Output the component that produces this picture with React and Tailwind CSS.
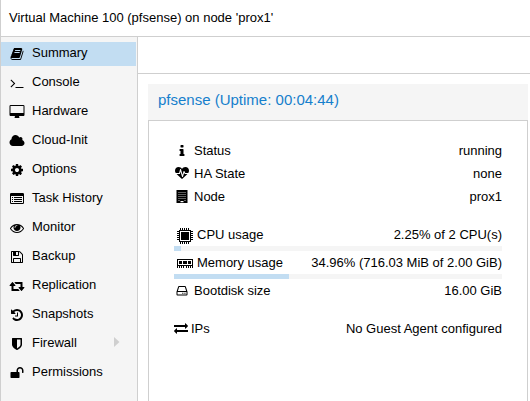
const paths = {
  book: 'M1703 478q40 57 18 129l-275 906q-19 64-76.5 107.5t-122.5 43.5h-923q-77 0-148.5-53.5t-99.5-131.5q-24-67-2-127 0-4 3-27t4-37q1-8-3-21.5t-3-19.5q2-11 8-21t16.5-23.5 16.5-23.5q23-38 45-91.5t30-91.5q3-10 .5-30t-.5-28q3-11 17-28t17-23q21-36 42-92t25-90q1-9-2.5-32t.5-28q4-13 22-30.5t22-22.5q19-26 42.5-84.5t27.5-96.5q1-8-3-25.5t-2-26.5q2-8 9-18t18-23 17-21q8-12 16.5-30.5t15-35 16-36 19.5-32 26.5-23.5 36-11.5 47.5 5.5l-1 3q38-9 51-9h761q74 0 114 56t18 130l-274 906q-36 119-71.5 153.5t-128.5 34.5h-869q-27 0-38 15-11 16-1 43 24 70 144 70h923q29 0 56-15.5t35-41.5l300-987q7-22 5-57 38 15 59 43zm-1064 2q-4 13 2 22.5t20 9.5h608q13 0 25.5-9.5t16.5-22.5l21-64q4-13-2-22.5t-20-9.5h-608q-13 0-25.5 9.5t-16.5 22.5zm-83 256q-4 13 2 22.5t20 9.5h608q13 0 25.5-9.5t16.5-22.5l21-64q4-13-2-22.5t-20-9.5h-608q-13 0-25.5 9.5t-16.5 22.5z',
  terminal: 'M649 983l-466 466q-10 10-23 10t-23-10l-50-50q-10-10-10-23t10-23l393-393-393-393q-10-10-10-23t10-23l50-50q10-10 23-10t23 10l466 466q10 10 10 23t-10 23zm1079 457v64q0 14-9 23t-23 9h-960q-14 0-23-9t-9-23v-64q0-14 9-23t23-9h960q14 0 23 9t9 23z',
  desktop: 'M1728 992v-832q0-13-9.5-22.5t-22.5-9.5h-1600q-13 0-22.5 9.5t-9.5 22.5v832q0 13 9.5 22.5t22.5 9.5h1600q13 0 22.5-9.5t9.5-22.5zm128-832v1088q0 66-47 113t-113 47h-544q0 37 16 77.5t32 71 16 43.5q0 26-19 45t-45 19h-512q-26 0-45-19t-19-45q0-14 16-44t32-70 16-78h-544q-66 0-113-47t-47-113v-1088q0-66 47-113t113-47h1600q66 0 113 47t47 113z',
  cloud: 'M1856 1152q0 159-112.5 271.5t-271.5 112.5h-1088q-185 0-316.5-131.5t-131.5-316.5q0-132 71-241.5t187-163.5q-2-28-2-43 0-212 150-362t362-150q158 0 286.5 88t187.5 230q70-62 166-62 106 0 181 75t75 181q0 75-41 138 129 30 213 134.5t84 239.5z',
  cog: 'M1152 896q0-106-75-181t-181-75-181 75-75 181 75 181 181 75 181-75 75-181zm512-109v222q0 12-8 23t-20 13l-185 28q-19 54-39 91 35 50 107 138 10 12 10 25t-9 23q-27 37-99 108t-94 71q-12 0-26-9l-138-108q-44 23-91 38-16 136-29 186-7 28-36 28h-222q-14 0-24.5-8.5t-11.5-21.5l-28-184q-49-16-90-37l-141 107q-10 9-25 9-14 0-25-11-126-114-165-168-7-10-7-23 0-12 8-23 15-21 51-66.5t54-70.5q-27-50-41-99l-183-27q-13-2-21-12.5t-8-23.5v-222q0-12 8-23t19-13l186-28q14-46 39-92-40-57-107-138-10-12-10-24 0-10 9-23 26-36 98.5-107.5t94.5-71.5q13 0 26 10l138 107q44-23 91-38 16-136 29-186 7-28 36-28h222q14 0 24.5 8.5t11.5 21.5l28 184q49 16 90 37l142-107q9-9 24-9 13 0 25 10 129 119 165 170 7 8 7 22 0 12-8 23-15 21-51 66.5t-54 70.5q26 50 41 98l183 28q13 2 21 12.5t8 23.5z',
  list: 'M160 128h1472q160 0 160 160v1088q0 160-160 160H160q-160 0-160-160V288q0-160 160-160zM128 512v864q0 32 32 32h1472q32 0 32-32V512zM256 640h128v128H256zM512 640h1024v128H512zM256 896h128v128H256zM512 896h1024v128H512zM256 1152h128v128H256zM512 1152h1024v128H512z',
  eye: 'M1664 960q-152-236-381-353 61 104 61 225 0 185-131.5 316.5t-316.5 131.5-316.5-131.5-131.5-316.5q0-121 61-225-229 117-381 353 133 205 333.5 326.5t434.5 121.5 434.5-121.5 333.5-326.5zm-720-384q0-20-14-34t-34-14q-125 0-214.5 89.5t-89.5 214.5q0 20 14 34t34 14 34-14 14-34q0-86 61-147t147-61q20 0 34-14t14-34zm848 384q0 34-20 69-140 230-376.5 368.5t-499.5 138.5-499.5-139-376.5-368q-20-35-20-69t20-69q140-229 376.5-368t499.5-139 499.5 139 376.5 368q20 35 20 69z',
  floppy: 'M512 1536h768v-384h-768v384zm896 0h128v-896q0-14-10-38.5t-20-34.5l-281-281q-10-10-34-20t-39-10v416q0 40-28 68t-68 28h-576q-40 0-68-28t-28-68v-416h-128v1280h128v-416q0-40 28-68t68-28h832q40 0 68 28t28 68v416zm-384-928v-320q0-13-9.5-22.5t-22.5-9.5h-192q-13 0-22.5 9.5t-9.5 22.5v320q0 13 9.5 22.5t22.5 9.5h192q13 0 22.5-9.5t9.5-22.5zm640 32v928q0 40-28 68t-68 28h-1344q-40 0-68-28t-28-68v-1344q0-40 28-68t68-28h928q40 0 88 20t76 48l280 280q28 28 48 76t20 88z',
  retweet: 'M1216 1504q0 13-9.5 22.5t-22.5 9.5h-960q-8 0-13.5-2t-9-7-5.5-8-3-11.5-1-11.5v-600h-192q-26 0-45-19t-19-45q0-24 15-41l320-384q19-22 49-22t49 22l320 384q15 17 15 41 0 26-19 45t-45 19h-192v384h576q16 0 25 11l160 192q7 10 7 21zm640-416q0 24-15 41l-320 384q-20 23-49 23t-49-23l-320-384q-15-17-15-41 0-26 19-45t45-19h192v-384h-576q-16 0-25-12l-160-192q-7-9-7-20 0-13 9.5-22.5t22.5-9.5h960q8 0 13.5 2t9 7 5.5 8 3 11.5 1 11.5v600h192q26 0 45 19t19 45z',
  history: 'M1664 896q0 156-61 298t-164 245-245 164-298 61q-172 0-327-72.5t-264-204.5q-7-10-6.5-22.5t8.5-20.5l137-138q10-9 25-9 16 2 23 12 73 95 179 147t225 52q104 0 198.5-40.5t163.5-109.5 109.5-163.5 40.5-198.5-40.5-198.5-109.5-163.5-163.5-109.5-198.5-40.5q-98 0-188 35.5t-160 101.5l137 138q31 30 14 69-17 40-59 40h-448q-26 0-45-19t-19-45v-448q0-42 40-59 39-17 69 14l130 129q107-101 244.5-156.5t284.5-55.5q156 0 298 61t245 164 164 245 61 298zm-640-288v448q0 14-9 23t-23 9h-320q-14 0-23-9t-9-23v-64q0-14 9-23t23-9h224v-352q0-14 9-23t23-9h64q14 0 23 9t9 23z',
  shield: 'M1344 960v-640h-448v1137q119-63 213-137 235-184 235-360zm192-768v768q0 86-33.5 170.5t-83 150-118 127.5-126.5 103-121 77.5-89.5 49.5-42.5 20q-12 6-26 6t-26-6q-16-7-42.5-20t-89.5-49.5-121-77.5-126.5-103-118-127.5-83-150-33.5-170.5v-768q0-26 19-45t45-19h1152q26 0 45 19t19 45z',
  unlock: 'M1728 576v256q0 26-19 45t-45 19h-64q-26 0-45-19t-19-45v-256q0-106-75-181t-181-75-181 75-75 181v192h96q40 0 68 28t28 68v576q0 40-28 68t-68 28h-960q-40 0-68-28t-28-68v-576q0-40 28-68t68-28h672v-192q0-185 131.5-316.5t316.5-131.5 316.5 131.5 131.5 316.5z',
  info: 'M1216 1344v128q0 26-19 45t-45 19h-512q-26 0-45-19t-19-45v-128q0-26 19-45t45-19h64v-384h-64q-26 0-45-19t-19-45v-128q0-26 19-45t45-19h384q26 0 45 19t19 45v576h64q26 0 45 19t19 45zm-128-1152v192q0 26-19 45t-45 19h-256q-26 0-45-19t-19-45v-192q0-26 19-45t45-19h256q26 0 45 19t19 45z',
  heartbeat: 'M1280 896h305q-5 6-10 10.5t-9 7.5l-3 4-623 600q-18 18-44 18t-44-18l-624-602q-5-2-21-20h369q22 0 39.5-13.5t22.5-34.5l70-281 190 667q6 20 23 33t39 13q21 0 38-13t23-33l146-485 56 112q18 35 57 35zm512-428q0 145-103 300h-369l-111-221q-8-17-25.5-27t-36.5-8q-45 5-56 46l-129 430-196-686q-6-20-23.5-33t-39.5-13-39 13.5-22 34.5l-116 464h-423q-103-155-103-300 0-220 127-344t351-124q62 0 126.5 21.5t120 58 95.5 68.5 76 68q36-36 76-68t95.5-68.5 120-58 126.5-21.5q224 0 351 124t127 344z',
  building: 'M192 0h1408v1664H192zM448 256v96h128V256zM704 256v96h128V256zM960 256v96h128V256zM1216 256v96h128V256zM448 512v96h128V512zM704 512v96h128V512zM960 512v96h128V512zM1216 512v96h128V512zM448 768v96h128V768zM704 768v96h128V768zM960 768v96h128V768zM1216 768v96h128V768zM448 1024v96h128v-96zM704 1024v96h128v-96zM960 1024v96h128v-96zM1216 1024v96h128v-96zM448 1280v96h128v-96zM1216 1280v96h128v-96zM704 1408v160h384v-160z',
  hdd: 'M512 256h768q80 0 104 72l188 568q28 64 28 128v320q0 128-128 128H320q-128 0-128-128v-320q0-64 28-128l188-568q24-72 104-72zM528 384L368 880h1056L1264 384zM320 1008v320h1152v-320zM928 1104h144v128H928zM1200 1104h144v128h-144z',
  exchange: 'M1792 1184v192q0 13-9.5 22.5t-22.5 9.5h-1376v192q0 13-9.5 22.5t-22.5 9.5q-12 0-24-10l-319-320q-9-9-9-22 0-14 9-23l320-320q9-9 23-9 13 0 22.5 9.5t9.5 22.5v192h1376q13 0 22.5 9.5t9.5 22.5zm0-544q0 14-9 23l-320 320q-9 9-23 9-13 0-22.5-9.5t-9.5-22.5v-192h-1376q-13 0-22.5-9.5t-9.5-22.5v-192q0-13 9.5-22.5t22.5-9.5h1376v-192q0-14 9-23t23-9q12 0 24 10l319 319q9 9 9 23z',
};

function Icon({ name, className = 'size-3.5' }) {
  return (
    <svg viewBox="0 0 1792 1792" fill="currentColor" fillRule="evenodd" className={`shrink-0 overflow-visible ${className}`}>
      <path d={paths[name]} />
    </svg>
  );
}

function CpuIcon() {
  return (
    <svg viewBox="0 0 16 16" shapeRendering="crispEdges" className="mt-[5px] ml-[3px] size-4 shrink-0">
      <path fillRule="evenodd" d="M2 2h12v12H2zM3 3v10h10V3zM4 4h8v8H4zM3 0h1v2H3zM5 0h1v2H5zM7 0h1v2H7zM9 0h1v2H9zM11 0h1v2h-1zM3 14h1v2H3zM5 14h1v2H5zM7 14h1v2H7zM9 14h1v2H9zM11 14h1v2h-1zM0 3h2v1H0zM0 5h2v1H0zM0 7h2v1H0zM0 9h2v1H0zM0 11h2v1H0zM14 3h2v1h-2zM14 5h2v1h-2zM14 7h2v1h-2zM14 9h2v1h-2zM14 11h2v1h-2z" />
    </svg>
  );
}

function MemoryIcon() {
  return (
    <svg viewBox="0 0 16 16" shapeRendering="crispEdges" className="mt-[5px] ml-[3px] size-4 shrink-0">
      <path fillRule="evenodd" d="M0 3h16v7H0zM1 4v5h14V4zM2 5h3v3H2zM6 5h4v3H6zM11 5h3v3h-3zM0 10h1v2H0zM2 10h1v2H2zM4 10h1v2H4zM6 10h1v2H6zM9 10h1v2H9zM11 10h1v2h-1zM13 10h1v2h-1zM15 10h1v2h-1z" />
    </svg>
  );
}

const menu = [
  ['book', 'Summary'],
  ['terminal', 'Console'],
  ['desktop', 'Hardware'],
  ['cloud', 'Cloud-Init'],
  ['cog', 'Options'],
  ['list', 'Task History'],
  ['eye', 'Monitor'],
  ['floppy', 'Backup'],
  ['retweet', 'Replication'],
  ['history', 'Snapshots'],
  ['shield', 'Firewall'],
  ['unlock', 'Permissions'],
];

function Row({ icon, label, value, className = 'h-[23px] leading-[22px]', gap = 'ml-[5px]' }) {
  return (
    <div className={`flex items-start ${className}`}>
      {icon}
      <span className={gap}>{label}</span>
      <span className="ml-auto">{value}</span>
    </div>
  );
}

function Bar({ percent }) {
  return (
    <div className="h-[5px] bg-[#f5f5f5]">
      <div className="h-full bg-[#c2ddf2]" style={{ width: `${percent}%` }} />
    </div>
  );
}

export default function App() {
  return (
    <div className="flex h-[401px] w-[530px] flex-col overflow-hidden border-l border-[#cfcfcf] bg-white font-['Liberation_Sans',Arial,sans-serif] text-[13px] text-black">
      <header className="h-[37px] shrink-0 border-b border-[#cfcfcf] pl-2 leading-[35px]">
        Virtual Machine 100 (pfsense) on node 'prox1'
      </header>
      <div className="flex min-h-0 flex-1">
        <nav className="flex w-[137px] shrink-0 flex-col gap-[5px] border-r border-[#cfcfcf] bg-[#f5f5f5] pt-[5px]">
          {menu.map(([icon, label], i) => (
            <div key={label} className={`mr-px flex h-6 items-start pl-[9px] ${i === 0 ? 'bg-[#c2ddf2]' : ''}`}>
              <Icon name={icon} className="mt-[5px] size-3.5" />
              <span className="ml-2 leading-[22px]">{label}</span>
              {label === 'Firewall' && (
                <svg viewBox="0 0 6 10" className="mt-[5px] mr-4 ml-auto h-2.5 w-1.5 fill-[#cfcfcf]">
                  <path d="M0 0l5.5 5L0 10z" />
                </svg>
              )}
            </div>
          ))}
        </nav>
        <main className="flex min-w-0 flex-1 flex-col">
          <div className="h-[37px] shrink-0 border-b border-[#cfcfcf]" />
          <section className="mt-2.5 mr-0.5 ml-2.5 flex flex-1 flex-col">
            <h2 className="h-9 shrink-0 bg-[#f5f5f5] pl-2.5 text-[15px] leading-[32px] text-[#157fcc]">
              pfsense (Uptime: 00:04:44)
            </h2>
            <div className="flex-1 border-x border-t border-[#cfcfcf] pt-[19px] pr-[25px] pl-[25px]">
              <Row icon={<Icon name="info" className="mt-1 ml-px size-3.5" />} label="Status" value="running" />
              <Row icon={<Icon name="heartbeat" className="mt-1 ml-px size-3.5" />} label="HA State" value="none" />
              <Row icon={<Icon name="building" className="mt-1 ml-px size-3.5" />} label="Node" value="prox1" className="h-[37px] leading-[22px]" />
              <Row icon={<CpuIcon />} label="CPU usage" value="2.25% of 2 CPU(s)" className="h-[23px] leading-6" gap="ml-1" />
              <Bar percent={2.25} />
              <Row icon={<MemoryIcon />} label="Memory usage" value="34.96% (716.03 MiB of 2.00 GiB)" className="h-[23px] leading-6" gap="ml-1" />
              <Bar percent={34.96} />
              <Row icon={<Icon name="hdd" className="mt-[5px] ml-px size-3.5" />} label="Bootdisk size" value="16.00 GiB" className="h-[38px] leading-6" />
              <Row icon={<Icon name="exchange" className="mt-1 size-3.5" />} label="IPs" value="No Guest Agent configured" className="h-[23px] leading-6" gap="ml-[3px]" />
            </div>
          </section>
        </main>
      </div>
    </div>
  );
}
